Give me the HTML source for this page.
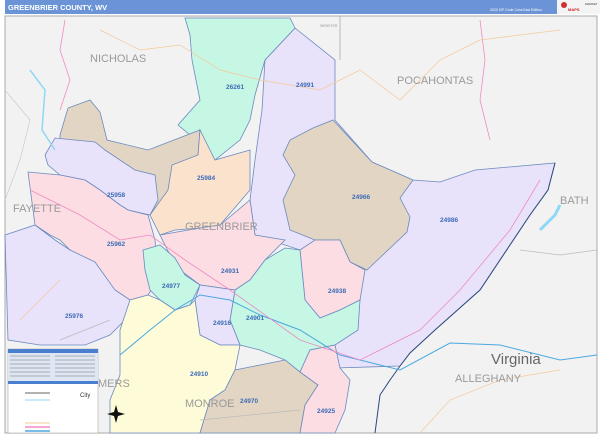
<!DOCTYPE html>
<html><head><meta charset="utf-8"><style>
html,body{margin:0;padding:0;width:600px;height:435px;overflow:hidden;background:#fff;font-family:"Liberation Sans",sans-serif}
</style></head><body>
<svg width="600" height="435" viewBox="0 0 600 435" xmlns="http://www.w3.org/2000/svg" font-family="Liberation Sans, sans-serif">
<rect x="0" y="0" width="600" height="435" fill="#fff"/>
<rect x="5" y="0" width="552" height="14" fill="#6a94d6"/>
<text x="8" y="10" font-size="7.5" font-weight="bold" fill="#fff">GREENBRIER COUNTY, WV</text>
<text x="490" y="11" font-size="3.5" fill="#fff">2020 ZIP Code ColorCast Edition</text>
<rect x="557" y="0" width="43" height="14" fill="#f4f4f4"/>
<circle cx="564" cy="5" r="3" fill="#c33"/>
<text x="568" y="11" font-size="4" fill="#c22" font-weight="bold">MAPS</text>
<text x="585" y="5" font-size="3" fill="#333">MARKET</text>
<rect x="5" y="16" width="592" height="417" fill="#f2f2f2" stroke="#aaa" stroke-width="1"/>
<line x1="340" y1="16" x2="340" y2="60" stroke="#aaa" stroke-width="0.8"/>
<!-- big lavender 24991/24986 -->
<path d="M295,28 L335,60 L335,120 L372,162 L413,180 L440,182 L475,170 L555,163 L548,190 L530,215 L480,290 L435,330 L410,353 L400,366 L335,368 L300,372 L300,250 L255,235 L250,200 L255,160 L262,110 L265,60 Z" fill="#e8e2fa" stroke="#6a8abf" stroke-width="0.8"/>
<!-- 24966 tan -->
<path d="M333,120 L372,162 L413,180 L400,198 L410,217 L407,232 L367,270 L350,262 L340,240 L315,240 L290,230 L283,200 L295,175 L283,155 L290,140 L313,128 Z" fill="#e3d5c3" stroke="#6a8abf" stroke-width="0.8"/>
<!-- 26261 green -->
<path d="M185,18 L290,18 L295,28 L265,60 L255,95 L250,120 L240,140 L215,160 L200,150 L190,135 L178,125 L200,100 L192,60 L190,35 Z" fill="#c6f6e4" stroke="#6a8abf" stroke-width="0.8"/>
<!-- 25981 tan -->
<path d="M60,135 L68,108 L90,100 L100,112 L107,140 L148,150 L200,130 L198,155 L195,185 L175,225 L160,230 L148,205 L120,175 L90,160 L60,150 Z" fill="#e3d5c3" stroke="#6a8abf" stroke-width="0.8"/>
<!-- 25984 peach -->
<path d="M200,130 L215,160 L250,150 L250,190 L220,225 L200,228 L175,230 L160,235 L150,215 L168,190 L172,165 L198,155 Z" fill="#fbe2cd" stroke="#6a8abf" stroke-width="0.8"/>
<!-- 25958 lavender -->
<path d="M45,155 L55,138 L95,142 L105,150 L135,170 L155,175 L158,200 L150,215 L128,210 L120,205 L100,190 L85,180 L60,175 L48,165 Z" fill="#e8e2fa" stroke="#6a8abf" stroke-width="0.8"/>
<!-- 25962 pink -->
<path d="M28,172 L60,175 L85,180 L100,190 L120,205 L128,210 L148,215 L155,240 L158,280 L148,295 L130,300 L115,290 L100,275 L85,260 L70,250 L60,240 L50,235 L35,225 Z" fill="#fbdde3" stroke="#6a8abf" stroke-width="0.8"/>
<!-- 25976 lavender -->
<path d="M5,235 L35,225 L55,240 L70,250 L95,262 L115,290 L130,300 L125,320 L110,335 L85,345 L40,345 L8,340 Z" fill="#e8e2fa" stroke="#6a8abf" stroke-width="0.8"/>
<!-- 24931 pink -->
<path d="M160,235 L200,228 L220,225 L250,200 L255,235 L285,240 L265,260 L250,280 L235,290 L200,285 L180,270 L170,255 Z" fill="#fbdde3" stroke="#6a8abf" stroke-width="0.8"/>
<!-- 24977 mint -->
<path d="M143,250 L160,245 L175,258 L185,275 L200,285 L190,305 L175,310 L160,300 L150,290 L145,270 Z" fill="#c6f6e4" stroke="#6a8abf" stroke-width="0.8"/>
<!-- 24938 pink -->
<path d="M300,250 L315,240 L340,240 L350,262 L365,270 L360,300 L340,310 L320,318 L305,300 Z" fill="#fbdde3" stroke="#6a8abf" stroke-width="0.8"/>
<!-- 24901 mint -->
<path d="M235,290 L250,280 L265,260 L285,248 L300,250 L305,300 L320,318 L340,310 L360,300 L358,330 L335,345 L310,350 L300,372 L285,360 L260,350 L240,345 L230,320 Z" fill="#c6f6e4" stroke="#6a8abf" stroke-width="0.8"/>
<!-- 24916 lavender -->
<path d="M195,300 L200,285 L235,290 L230,320 L240,345 L220,345 L200,335 Z" fill="#e8e2fa" stroke="#6a8abf" stroke-width="0.8"/>
<!-- 24910 yellow -->
<path d="M120,330 L130,300 L148,295 L160,300 L175,310 L190,305 L195,300 L200,335 L220,345 L240,345 L235,370 L225,390 L210,400 L200,433 L110,433 L110,400 L120,375 Z" fill="#fdfbd8" stroke="#6a8abf" stroke-width="0.8"/>
<!-- 24970 tan -->
<path d="M225,390 L235,370 L260,365 L285,360 L300,372 L318,385 L305,405 L300,433 L200,433 L210,400 Z" fill="#e3d5c3" stroke="#6a8abf" stroke-width="0.8"/>
<!-- 24925 pink -->
<path d="M300,372 L310,350 L335,345 L340,368 L350,380 L345,410 L335,433 L300,433 L305,405 L318,385 Z" fill="#fbdde3" stroke="#6a8abf" stroke-width="0.8"/>
<!-- state border -->
<path d="M555,163 L548,190 L530,215 L480,290 L435,330 L410,353 L400,366 L390,380 L380,395 L375,433" fill="none" stroke="#2c4a7a" stroke-width="1"/>
<!-- roads / rivers -->
<path d="M30,70 L45,90 L42,130 L55,150" fill="none" stroke="#8fd8f5" stroke-width="1.5"/>
<path d="M540,230 L555,215 L560,205" fill="none" stroke="#8fd8f5" stroke-width="3"/>
<path d="M120,355 L150,330 L175,310 L200,295 L230,300 L260,315 L300,330 L340,355 L400,370 L450,343 L500,345 L560,360 L597,355" fill="none" stroke="#4aa8e0" stroke-width="1"/>
<path d="M30,190 L80,215 L120,240 L150,235 L185,260 L230,290 L300,340 L360,360 L420,330 L460,290 L510,230 L540,180" fill="none" stroke="#f08bc4" stroke-width="0.8"/>
<path d="M65,20 L60,50 L70,80 L60,110" fill="none" stroke="#f08bc4" stroke-width="0.8"/>
<path d="M480,20 L485,60 L480,100 L490,140" fill="none" stroke="#f08bc4" stroke-width="0.8"/>
<path d="M100,30 L140,50 L180,45 L220,70 L260,80 L320,90 L360,70 L400,100 L440,60 L480,40 L560,30" fill="none" stroke="#f3c99a" stroke-width="0.7"/>
<path d="M20,320 L40,300 L60,280 M420,433 L450,400 L500,380 L560,370" fill="none" stroke="#f3c99a" stroke-width="0.7"/>
<path d="M5,90 L30,120 L20,160 L5,200" fill="none" stroke="#ccc" stroke-width="0.7"/>
<path d="M520,250 L560,255 L597,250 M110,320 L60,340 M200,420 L300,410" fill="none" stroke="#bbb" stroke-width="0.7"/>
<!-- county labels -->
<g fill="#9a9a9a" font-size="11">
<text x="90" y="62">NICHOLAS</text>
<text x="397" y="84">POCAHONTAS</text>
<text x="13" y="212">FAYETTE</text>
<text x="185" y="230">GREENBRIER</text>
<text x="560" y="204">BATH</text>
<text x="455" y="382">ALLEGHANY</text>
<text x="98" y="387">MERS</text>
<text x="185" y="407">MONROE</text>
</g>
<text x="491" y="364" font-size="15" fill="#666">Virginia</text>
<text x="320" y="27" font-size="3.5" fill="#999">WEBSTER</text>
<!-- zip labels -->
<g fill="#3d6cb6" font-size="6.5" font-weight="bold">
<text x="296" y="87">24991</text>
<text x="226" y="89">26261</text>
<text x="352" y="199">24966</text>
<text x="440" y="222">24986</text>
<text x="197" y="180">25984</text>
<text x="107" y="197">25958</text>
<text x="107" y="246">25962</text>
<text x="221" y="273">24931</text>
<text x="162" y="288">24977</text>
<text x="328" y="293">24938</text>
<text x="246" y="320">24901</text>
<text x="213" y="325">24916</text>
<text x="65" y="318">25976</text>
<text x="190" y="376">24910</text>
<text x="240" y="403">24970</text>
<text x="317" y="413">24925</text>
</g>
<!-- legend -->
<rect x="8" y="349" width="90" height="84" fill="#fff" stroke="#999" stroke-width="0.5"/>
<rect x="8" y="349" width="90" height="4" fill="#4a7fd0"/>
<rect x="8" y="353" width="90" height="28" fill="#dde6f2"/>
<rect x="8" y="381" width="90" height="3" fill="#4a7fd0"/>
<g stroke="#555" stroke-width="0.4">
<line x1="10" y1="356" x2="50" y2="356"/><line x1="10" y1="360" x2="50" y2="360"/><line x1="10" y1="364" x2="50" y2="364"/><line x1="10" y1="368" x2="50" y2="368"/><line x1="10" y1="372" x2="50" y2="372"/><line x1="10" y1="376" x2="50" y2="376"/>
<line x1="55" y1="356" x2="95" y2="356"/><line x1="55" y1="360" x2="95" y2="360"/><line x1="55" y1="364" x2="95" y2="364"/><line x1="55" y1="368" x2="95" y2="368"/><line x1="55" y1="372" x2="95" y2="372"/><line x1="55" y1="376" x2="95" y2="376"/>
</g>
<line x1="25" y1="393" x2="50" y2="393" stroke="#999" stroke-width="1.5"/>
<line x1="25" y1="400" x2="50" y2="400" stroke="#8fd8f5" stroke-width="1"/>
<line x1="25" y1="427" x2="50" y2="427" stroke="#f08bc4" stroke-width="1.5"/>
<line x1="25" y1="423" x2="50" y2="423" stroke="#f3c99a" stroke-width="1"/>
<line x1="25" y1="431" x2="50" y2="431" stroke="#4aa8e0" stroke-width="1.5"/>
<text x="80" y="397" font-size="6" fill="#333">City</text>
<!-- compass -->
<path d="M116,405 L118,412 L125,414 L118,416 L116,423 L114,416 L107,414 L114,412 Z" fill="#111"/>
</svg>
</body></html>
